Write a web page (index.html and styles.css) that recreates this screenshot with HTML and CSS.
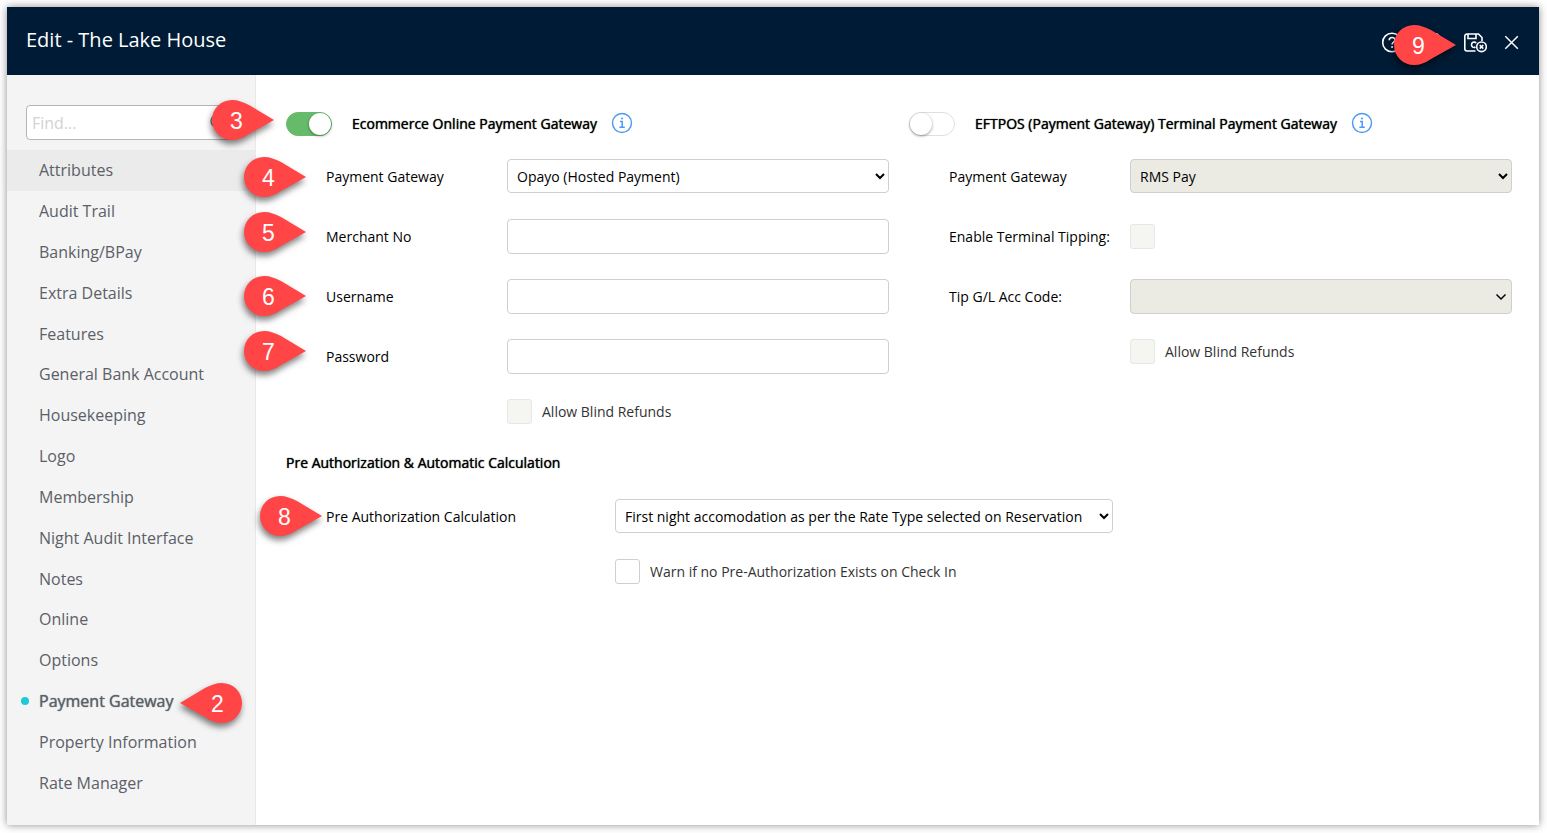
FILE: index.html
```html
<!DOCTYPE html>
<html lang="en">

<head>
    <meta charset="UTF-8">
    <meta name="viewport" content="width=device-width, initial-scale=1.0">
    <title>Edit - The Lake House</title>
    <link rel="stylesheet" href="styles.css">
</head>

<body>
    <!-- Shared shape for the step markers -->
    <svg class="defs" width="0" height="0" aria-hidden="true">
        <symbol id="pin" viewBox="0 0 62 40">
            <path fill="#ff4545" d="M20 0C26 0 31 2 37 5L62 20L37 34C31 38 26 40 20 40A20 20 0 0 1 20 0Z" />
        </symbol>
        <symbol id="info" viewBox="0 0 22 22">
            <circle cx="11" cy="11" r="9.5" fill="none" stroke="#4a98f7" stroke-width="1.4" />
            <path d="M10 6.4h2M9 9.5h2.2v5.5M8.4 15.2h5.4" fill="none" stroke="#4a98f7" stroke-width="1.5" />
        </symbol>
    </svg>

    <div class="dialog">
        <!-- Title bar -->
        <header class="titlebar">
            <h1>Edit - The Lake House</h1>
            <div class="actions">
                <button type="button" class="help" aria-label="Help">
                    <svg width="24" height="24" viewBox="0 0 24 24" fill="none" stroke="#fff" stroke-width="1.6">
                        <circle cx="12" cy="11.500" r="9.3" />
                        <path d="M9.2 9.3c0-3.6 5.8-3.6 5.8-.2 0 2-2.9 2.1-2.9 4.3M12.1 15.1v1.8" />
                    </svg>
                </button>
                <button type="button" aria-label="Save">
                    <svg width="24" height="24" viewBox="0 0 24 24" fill="none" stroke="#fff" stroke-width="1.6">
                        <path d="M3 3h8l4 4v10a2 2 0 0 1-2 2H3a2 2 0 0 1-2-2V5a2 2 0 0 1 2-2zM5 3v4h6V3" />
                    </svg>
                </button>
                <button type="button" aria-label="Save and close">
                    <svg width="24" height="24" viewBox="0 0 24 24" fill="none" stroke="#fff" stroke-width="1.6">
                        <path d="M12.500 20H4a2.200 2.200 0 0 1-2.200-2.200V5.200A2.200 2.200 0 0 1 4 3h11.500l3.500 3.500v3.500M5 3v4.500h8V3M13.300 11.800c-2.600-1.600-4.800-.3-4.800 1.900s1.900 3.400 4 2.300" />
                        <circle cx="18.500" cy="15.800" r="4.800" />
                        <path d="M16.700 14l3.600 3.600M20.300 14l-3.600 3.600" />
                    </svg>
                </button>
                <button type="button" aria-label="Close">
                    <svg width="24" height="24" viewBox="0 0 24 24" fill="none" stroke="#fff" stroke-width="1.5">
                        <path d="M5.300 5.200l12.500 12.500M17.800 5.200L5.300 17.700" />
                    </svg>
                </button>
            </div>
        </header>

        <div class="body">
            <!-- Side menu -->
            <aside class="sidebar">
                <div class="search">
                    <input type="text" placeholder="Find..." aria-label="Find">
                    <svg width="18" height="18" viewBox="0 0 18 18" fill="none" stroke="#777" stroke-width="1.5">
                        <circle cx="7" cy="7" r="6" />
                        <path d="M11.5 11.5l5 5" />
                    </svg>
                </div>
                <nav class="menu">
                    <a href="#" class="hovered">Attributes</a>
                    <a href="#">Audit Trail</a>
                    <a href="#">Banking/BPay</a>
                    <a href="#">Extra Details</a>
                    <a href="#">Features</a>
                    <a href="#">General Bank Account</a>
                    <a href="#">Housekeeping</a>
                    <a href="#">Logo</a>
                    <a href="#">Membership</a>
                    <a href="#">Night Audit Interface</a>
                    <a href="#">Notes</a>
                    <a href="#">Online</a>
                    <a href="#">Options</a>
                    <a href="#" class="active">Payment Gateway</a>
                    <a href="#">Property Information</a>
                    <a href="#">Rate Manager</a>
                </nav>
            </aside>

            <main class="content">
                <div class="columns">
                    <!-- Ecommerce gateway -->
                    <section>
                        <div class="heading">
                            <input type="checkbox" class="toggle" id="ecommerce" checked>
                            <label for="ecommerce">Ecommerce Online Payment Gateway</label>
                            <svg class="info" width="22" height="22"><use href="#info" /></svg>
                        </div>
                        <div class="row">
                            <label for="gateway">Payment Gateway</label>
                            <select id="gateway">
                                <option>Opayo (Hosted Payment)</option>
                            </select>
                        </div>
                        <div class="row">
                            <label for="merchant">Merchant No</label>
                            <input type="text" id="merchant">
                        </div>
                        <div class="row">
                            <label for="username">Username</label>
                            <input type="text" id="username">
                        </div>
                        <div class="row">
                            <label for="password">Password</label>
                            <input type="password" id="password">
                        </div>
                        <div class="row check-row">
                            <label class="check"><input type="checkbox" disabled>Allow Blind Refunds</label>
                        </div>
                    </section>

                    <!-- EFTPOS gateway -->
                    <section>
                        <div class="heading">
                            <input type="checkbox" class="toggle" id="eftpos">
                            <label for="eftpos">EFTPOS (Payment Gateway) Terminal Payment Gateway</label>
                            <svg class="info" width="22" height="22"><use href="#info" /></svg>
                        </div>
                        <div class="row">
                            <label for="terminalGateway">Payment Gateway</label>
                            <select id="terminalGateway" disabled>
                                <option>RMS Pay</option>
                            </select>
                        </div>
                        <div class="row">
                            <label for="tipping">Enable Terminal Tipping:</label>
                            <input type="checkbox" id="tipping" disabled>
                        </div>
                        <div class="row">
                            <label for="tipCode">Tip G/L Acc Code:</label>
                            <div class="combo">
                                <select id="tipCode" disabled>
                                    <option></option>
                                </select>
                                <svg width="12" height="8" viewBox="0 0 12 8" fill="none" stroke="#000" stroke-width="1.5">
                                    <path d="M1.5 1.5L6 6l4.5-4.5" />
                                </svg>
                            </div>
                        </div>
                        <div class="row check-row">
                            <label class="check"><input type="checkbox" disabled>Allow Blind Refunds</label>
                        </div>
                    </section>
                </div>

                <!-- Pre authorization -->
                <section class="preauth">
                    <h2>Pre Authorization &amp; Automatic Calculation</h2>
                    <div class="row">
                        <label for="calculation">Pre Authorization Calculation</label>
                        <select id="calculation">
                            <option>First night accomodation as per the Rate Type selected on Reservation</option>
                        </select>
                    </div>
                    <div class="row check-row">
                        <label class="check"><input type="checkbox">Warn if no Pre-Authorization Exists on Check In</label>
                    </div>
                </section>
            </main>
        </div>

        <!-- Step markers laid over the dialog -->
        <div class="pin pin-left pin-2"><svg><use href="#pin" /></svg><span>2</span></div>
        <div class="pin pin-3"><svg><use href="#pin" /></svg><span>3</span></div>
        <div class="pin pin-4"><svg><use href="#pin" /></svg><span>4</span></div>
        <div class="pin pin-5"><svg><use href="#pin" /></svg><span>5</span></div>
        <div class="pin pin-6"><svg><use href="#pin" /></svg><span>6</span></div>
        <div class="pin pin-7"><svg><use href="#pin" /></svg><span>7</span></div>
        <div class="pin pin-8"><svg><use href="#pin" /></svg><span>8</span></div>
        <div class="pin pin-9"><svg><use href="#pin" /></svg><span>9</span></div>
    </div>
</body>

</html>
```
FILE: styles.css
```css
/* General styles */
* {
    box-sizing: border-box;
}

body {
    margin: 0;
    padding: 7px 8px 8px 7px;
    font-family: "Open Sans", sans-serif;
    font-size: 14px;
    line-height: 20px;
    color: #000;
    background: #fff;
}

.defs {
    position: absolute;
}

.dialog {
    position: relative;
    min-height: calc(100vh - 15px);
    display: flex;
    flex-direction: column;
    background: #fff;
    box-shadow: 0 0 8px rgba(0, 0, 0, 0.45);
}

/* Title bar */
.titlebar {
    height: 68px;
    padding: 0 15px 0 19px;
    display: flex;
    align-items: center;
    justify-content: space-between;
    background: #001b35;
    color: #fff;
}

.titlebar h1 {
    margin: 0;
    padding-bottom: 2px;
    font-size: 20px;
    font-weight: 400;
    line-height: 28px;
}

.actions {
    display: flex;
    gap: 13px;
    padding-top: 4px;
}

.actions button {
    width: 24px;
    height: 24px;
    padding: 0;
    border: 0;
    background: none;
    cursor: pointer;
}

.actions .help {
    margin-right: 9px;
}

.actions svg {
    display: block;
}

.body {
    flex: 1;
    display: flex;
}

/* Side menu */
.sidebar {
    width: 249px;
    padding: 30px 0 22px;
    display: flex;
    flex-direction: column;
    background: #f4f4f4;
    border-right: 1px solid #e9e9e9;
}

.search {
    position: relative;
    margin: 0 19px 10px;
}

.search input {
    display: block;
    width: 100%;
    height: 35px;
    padding: 0 30px 0 5px;
    border: 1px solid #b4b4b4;
    border-radius: 4px;
    font: 16px "Open Sans", sans-serif;
    background: #fff;
}

.search input::placeholder {
    color: #d2d2d2;
    opacity: 1;
}

.search svg {
    position: absolute;
    top: 9px;
    right: 8px;
}

.menu {
    flex: 1;
    display: grid;
    grid-auto-rows: 1fr;
}

.menu a {
    padding-left: 32px;
    display: flex;
    align-items: center;
    color: #5b6068;
    font-size: 16px;
    line-height: 24px;
    text-decoration: none;
}

.menu .hovered {
    background: #ebebeb;
}

.menu .active {
    padding-left: 14px;
    text-shadow: 0 0 1px #5b6068;
}

.menu .active::before {
    content: "";
    width: 8px;
    height: 8px;
    margin-right: 10px;
    border-radius: 50%;
    background: #1fcad6;
}

/* Form */
.content {
    flex: 1;
    padding: 34px 27px 30px 30px;
}

.columns {
    display: grid;
    grid-template-columns: 1fr 1fr;
    gap: 20px;
}

.heading {
    height: 30px;
    margin-bottom: 20px;
    display: flex;
    align-items: center;
}

.heading label,
.preauth h2 {
    font-size: 14px;
    font-weight: 400;
    text-shadow: 0 0 1px #000;
}

.info {
    margin: 0 0 3px 14px;
}

.row {
    height: 35px;
    margin-bottom: 25px;
    padding-left: 40px;
    display: grid;
    grid-template-columns: 181px 1fr;
    align-items: center;
}

.check-row {
    height: 25px;
    margin-bottom: 0;
}

.row .check {
    grid-column: 2;
    display: flex;
    align-items: center;
    gap: 10px;
    color: #333;
}

.row select,
.row input {
    width: 100%;
    height: 35px;
    margin: 0;
    padding: 0 5px;
    border: 1px solid #cfcfcf;
    border-radius: 4px;
    font: 14px "Open Sans", sans-serif;
    color: #000;
    background-color: #fff;
}

.row select {
    align-self: start;
    height: 34px;
    padding-right: 0;
}

.row select:disabled {
    background-color: #ebebe4;
    opacity: 1;
}

.row input[type="checkbox"] {
    appearance: none;
    width: 25px;
    height: 25px;
    border-radius: 3px;
}

.row input[type="checkbox"]:disabled {
    background: #f5f5f1;
    border-color: #e7e7e7;
}

.combo {
    position: relative;
}

.row .combo select {
    display: block;
    height: 35px;
    appearance: none;
}

.combo svg {
    position: absolute;
    top: 14px;
    right: 5px;
}

/* Toggle switch */
.toggle {
    appearance: none;
    width: 46px;
    height: 24px;
    margin: 0 20px 0 0;
    display: flex;
    border: 1px solid #dfdfdf;
    border-radius: 12px;
    background: #fff;
}

.toggle::before {
    content: "";
    width: 22px;
    height: 22px;
    border-radius: 50%;
    background: #fff;
    box-shadow: 0 1px 3px rgba(0, 0, 0, 0.4);
}

.toggle:checked {
    justify-content: flex-end;
    border-color: #66bb6a;
    background: #66bb6a;
}

/* Pre authorization */
.preauth {
    margin-top: 29px;
}

.preauth h2 {
    margin: 0 0 26px;
}

.preauth .row {
    grid-template-columns: 289px 498px;
}

/* Step markers */
.pin {
    position: absolute;
    width: 62px;
    height: 40px;
    color: #fff;
    font: 23px/42px "Liberation Sans", Arial, sans-serif;
    pointer-events: none;
}

.pin svg {
    display: block;
    width: 62px;
    height: 40px;
    overflow: visible;
    filter: drop-shadow(-1px 4px 3px rgba(0, 0, 0, 0.5));
}

.pin span {
    position: absolute;
    top: 0;
    left: 18px;
}

.pin-left svg {
    transform: scaleX(-1);
    filter: drop-shadow(1px 4px 3px rgba(0, 0, 0, 0.5));
}

.pin-left span {
    left: 31px;
}

.pin-2 {
    top: 676px;
    left: 173px;
}

.pin-3 {
    top: 93px;
    left: 205px;
}

.pin-4 {
    top: 150px;
    left: 237px;
}

.pin-5 {
    top: 205px;
    left: 237px;
}

.pin-6 {
    top: 269px;
    left: 237px;
}

.pin-7 {
    top: 324px;
    left: 237px;
}

.pin-8 {
    top: 489px;
    left: 253px;
}

.pin-9 {
    top: 18px;
    right: 83px;
}
```
